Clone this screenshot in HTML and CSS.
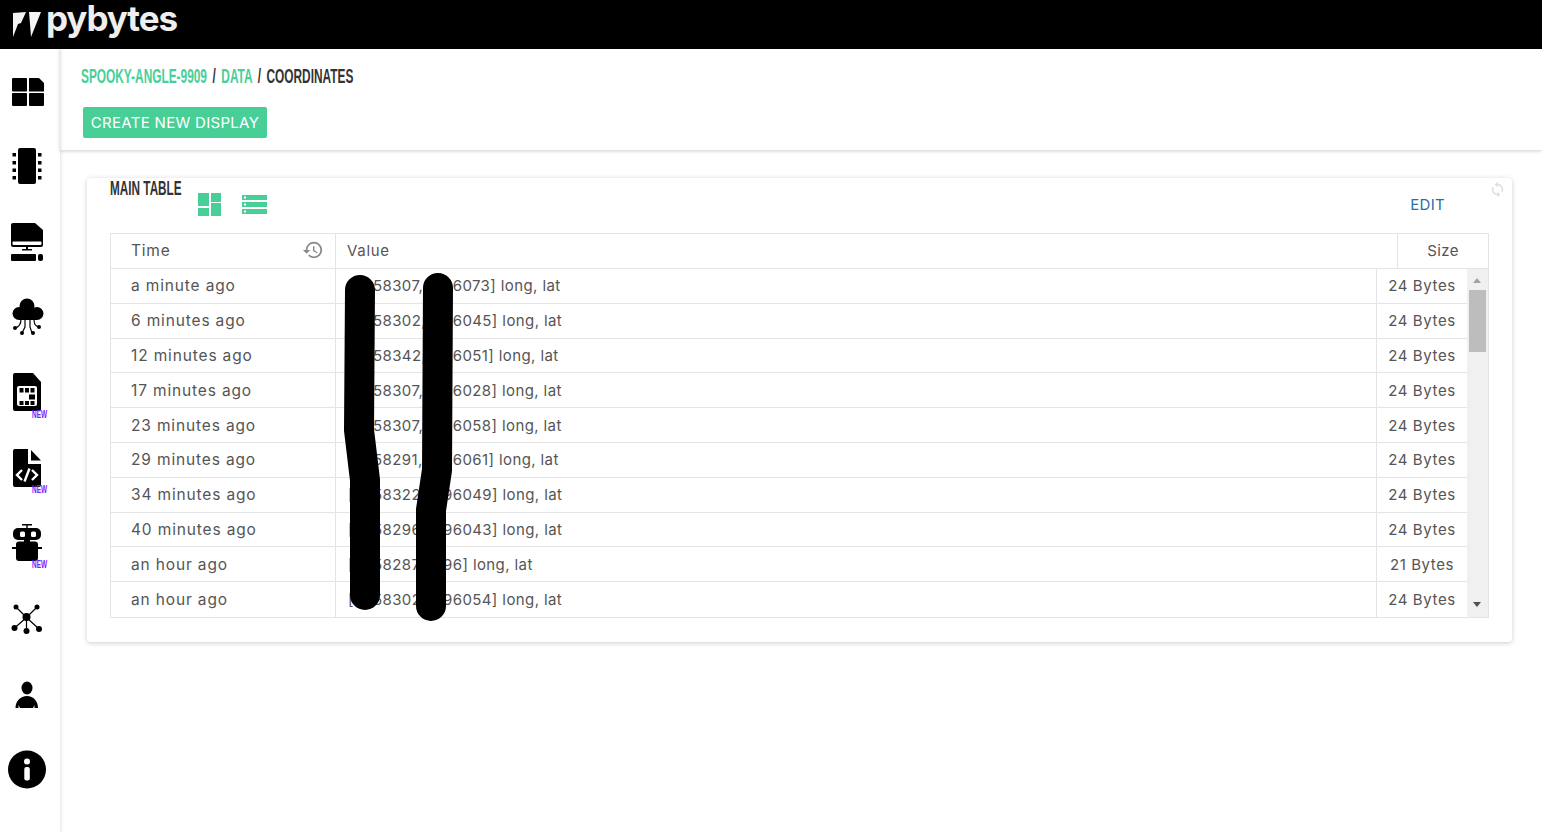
FILE: index.html
```html
<!DOCTYPE html>
<html>
  <head>
    <meta charset="utf-8">
    <title>Pybytes - Coordinates</title>
    <link rel="stylesheet" href="styles.css">
  </head>
  <body>
    <header class="topbar">
      <svg class="logo-mark" viewBox="0 0 28 26">
        <polygon points="0,1 13,0 8,11 5,12 0,25"/>
        <polygon points="16,0 28,0 18,25 17,12"/>
      </svg>
      <span class="logo-text">pybytes</span>
    </header>

    <div class="layout">
      <nav class="sidebar">
        <a class="nav-item">
          <svg viewBox="0 0 40 40"><rect x="5" y="7" width="15" height="13.500" rx="1"/><path d="M22 7h10l5 5v8.500H22z"/><rect x="5" y="22" width="15" height="13" rx="1"/><rect x="22" y="22" width="15" height="13" rx="1"/></svg>
        </a>
        <a class="nav-item">
          <svg viewBox="0 0 40 40"><rect x="11" y="2" width="18" height="36" rx="2"/><rect x="5.500" y="7" width="3.500" height="3.500"/><rect x="5.500" y="15" width="3.500" height="3.500"/><rect x="5.500" y="22.500" width="3.500" height="3.500"/><rect x="5.500" y="30" width="3.500" height="3.500"/><rect x="31" y="7" width="3.500" height="3.500"/><rect x="31" y="15" width="3.500" height="3.500"/><rect x="31" y="22.500" width="3.500" height="3.500"/><rect x="31" y="30" width="3.500" height="3.500"/></svg>
        </a>
        <a class="nav-item">
          <svg viewBox="0 0 40 40"><path d="M6 1h22l8 7v15a2 2 0 0 1-2 2H6a2 2 0 0 1-2-2V3a2 2 0 0 1 2-2z"/><rect class="cut" x="5.500" y="19.500" width="29" height="3.500" rx="1"/><rect x="19" y="25" width="2" height="3"/><rect x="15" y="27" width="10" height="1.500"/><rect x="4" y="32" width="25" height="7" rx="1"/><rect x="31" y="32" width="5" height="7" rx="2"/></svg>
        </a>
        <a class="nav-item">
          <svg viewBox="0 0 40 40"><circle cx="20" cy="9" r="7.500"/><circle cx="12" cy="16.500" r="6.500"/><circle cx="30" cy="16.500" r="6.500"/><rect x="12" y="14" width="18" height="9"/><path class="wire" d="M14 22c0 6-2 8-6 9M18 22v8l-3 6M23 22v8l2 6M27 22c0 5 1 7 5 8"/><circle cx="8" cy="31" r="2"/><circle cx="15" cy="36" r="2"/><circle cx="26" cy="36" r="2"/><circle cx="32" cy="30" r="2"/></svg>
        </a>
        <a class="nav-item">
          <svg viewBox="0 0 40 40"><path d="M8 0h18l8 9v27a2 2 0 0 1-2 2H8a2 2 0 0 1-2-2V2a2 2 0 0 1 2-2z"/><rect class="cut" x="10" y="13" width="20" height="20" rx="2"/><rect x="12.500" y="15" width="4" height="4.500"/><rect x="18" y="15" width="4" height="4.500"/><rect x="23.500" y="15" width="4" height="4.500"/><rect x="22" y="21.500" width="6" height="5"/><rect x="12.500" y="28" width="4" height="4"/><rect x="18" y="28" width="4" height="4"/><rect x="23.500" y="28" width="4" height="4"/></svg>
          <span class="badge">NEW</span>
        </a>
        <a class="nav-item">
          <svg viewBox="0 0 40 40"><path d="M8 1h13v15h13v21a2 2 0 0 1-2 2H8a2 2 0 0 1-2-2V3a2 2 0 0 1 2-2z"/><path d="M24 2l10 10.500H24z"/><path class="code" d="M15 22l-5 5 5 5M25 22l5 5-5 5M22.500 20.500l-5 13"/></svg>
          <span class="badge">NEW</span>
        </a>
        <a class="nav-item">
          <svg viewBox="0 0 40 40"><rect x="15" y="1" width="10" height="1.500"/><rect x="19.300" y="2" width="1.400" height="4"/><rect x="6" y="5" width="28" height="12" rx="5"/><rect class="cut" x="13" y="8.500" width="5" height="5.500" rx="1.500"/><rect class="cut" x="24" y="8.500" width="5" height="5.500" rx="1.500"/><rect x="17" y="16" width="6" height="3"/><rect x="9" y="18.500" width="22" height="19.500" rx="3"/><rect x="5" y="24" width="30" height="2"/></svg>
          <span class="badge">NEW</span>
        </a>
        <a class="nav-item">
          <svg viewBox="0 0 40 40"><path class="wire" d="M9 8l10.500 10.500M30 8L19.500 18.500M7.500 29l12-10.500M19.500 18.500V32M32 30L19.500 18.500"/><circle cx="19.500" cy="18" r="4"/><circle cx="9" cy="8" r="2.500"/><circle cx="30" cy="8" r="2.500"/><circle cx="7.500" cy="29" r="3"/><circle cx="19.500" cy="32" r="3"/><circle cx="32" cy="30" r="3"/></svg>
        </a>
        <a class="nav-item">
          <svg viewBox="0 0 40 40"><ellipse cx="20" cy="14" rx="5.500" ry="6.500"/><path d="M8.500 34c0-7 5-12 11.500-12s11 5 11 12h-3.500v-3l-1.500 3H13l-1.500-3v3z"/></svg>
        </a>
        <a class="nav-item">
          <svg viewBox="0 0 40 40"><circle cx="20" cy="19.500" r="19"/><circle class="cut" cx="20" cy="11.500" r="3"/><rect class="cut" x="17.300" y="17" width="5.500" height="13.500" rx="2"/></svg>
        </a>
      </nav>

      <main class="content">
        <section class="subheader">
          <h1 class="crumbs"><a>SPOOKY-ANGLE-9909</a> / <a>DATA</a> / COORDINATES</h1>
          <button class="btn-create">CREATE NEW DISPLAY</button>
        </section>

        <section class="card">
          <svg class="refresh" viewBox="0 0 24 24"><path d="M12 4V1L8 5l4 4V6c3.310 0 6 2.690 6 6 0 1.010-.25 1.970-.7 2.800l1.460 1.460A7.930 7.930 0 0 0 20 12c0-4.420-3.580-8-8-8zm0 14c-3.310 0-6-2.690-6-6 0-1.010.25-1.970.7-2.800L5.240 7.740A7.930 7.930 0 0 0 4 12c0 4.420 3.580 8 8 8v3l4-4-4-4v3z"/></svg>

          <div class="card-head">
            <h2 class="card-title">MAIN TABLE</h2>
            <svg class="view-icon quilt" viewBox="0 0 23 23"><rect x="0" y="0" width="11" height="13"/><rect x="0" y="15" width="11" height="8"/><rect x="13" y="0" width="10" height="9"/><rect x="13" y="10" width="10" height="13"/></svg>
            <svg class="view-icon list" viewBox="0 0 25 20"><path d="M0 0h25v5H0zM0 7h25v5H0zM0 14h25v5H0z"/><rect class="dot" x="2" y="1.500" width="2" height="2"/><rect class="dot" x="2" y="8.500" width="2" height="2"/><rect class="dot" x="2" y="15.500" width="2" height="2"/></svg>
            <a class="edit">EDIT</a>
          </div>

          <div class="table">
            <div class="thead">
              <div class="cell time-head"><span>Time</span><svg class="history" viewBox="0 0 24 24"><path d="M13 3a9 9 0 0 0-9 9H1l3.890 3.890.07.14L9 12H6c0-3.870 3.130-7 7-7s7 3.130 7 7-3.130 7-7 7c-1.930 0-3.680-.79-4.940-2.060l-1.420 1.420A8.954 8.954 0 0 0 13 21a9 9 0 0 0 0-18zm-1 5v5l4.280 2.540.72-1.210-3.500-2.080V8H12z"/></svg></div>
              <div class="cell value">Value</div>
              <div class="cell size">Size</div>
            </div>
            <div class="tbody">
              <div class="rows">
                <div class="row"><div class="cell time">a minute ago</div><div class="cell value"><span class="lead">[</span><span class="lon">58307,</span>96073] long, lat</div><div class="cell size">24 Bytes</div></div>
                <div class="row"><div class="cell time">6 minutes ago</div><div class="cell value"><span class="lead">[</span><span class="lon">58302,</span>96045] long, lat</div><div class="cell size">24 Bytes</div></div>
                <div class="row"><div class="cell time">12 minutes ago</div><div class="cell value"><span class="lead">[</span><span class="lon">58342,</span>96051] long, lat</div><div class="cell size">24 Bytes</div></div>
                <div class="row"><div class="cell time">17 minutes ago</div><div class="cell value"><span class="lead">[</span><span class="lon">58307,</span>96028] long, lat</div><div class="cell size">24 Bytes</div></div>
                <div class="row"><div class="cell time">23 minutes ago</div><div class="cell value"><span class="lead">[</span><span class="lon">58307,</span>96058] long, lat</div><div class="cell size">24 Bytes</div></div>
                <div class="row"><div class="cell time">29 minutes ago</div><div class="cell value"><span class="lead">[</span><span class="lon">58291,</span>96061] long, lat</div><div class="cell size">24 Bytes</div></div>
                <div class="row"><div class="cell time">34 minutes ago</div><div class="cell value"><span class="lead">[</span><span class="lon">58322,</span>96049] long, lat</div><div class="cell size">24 Bytes</div></div>
                <div class="row"><div class="cell time">40 minutes ago</div><div class="cell value"><span class="lead">[</span><span class="lon">58296,</span>96043] long, lat</div><div class="cell size">24 Bytes</div></div>
                <div class="row"><div class="cell time">an hour ago</div><div class="cell value"><span class="lead">[</span><span class="lon">58287,</span>96] long, lat</div><div class="cell size">21 Bytes</div></div>
                <div class="row"><div class="cell time">an hour ago</div><div class="cell value"><span class="lead">[</span><span class="lon">58302,</span>96054] long, lat</div><div class="cell size">24 Bytes</div></div>
              </div>
              <div class="scrollbar">
                <span class="arrow up"></span>
                <span class="thumb"></span>
                <span class="arrow down"></span>
              </div>
            </div>
          </div>
        </section>
      </main>
    </div>

    <!-- marker strokes drawn over the table -->
    <svg class="scribble" viewBox="0 0 1542 832">
      <path d="M360 290L359 430L365 480L365 595"/>
      <path d="M438 288L437 470L431 510L431 606"/>
    </svg>
  </body>
</html>
```

FILE: styles.css
```css
* {
  box-sizing: border-box;
}

html, body {
  height: 100%;
}

body {
  margin: 0;
  overflow: hidden;
  background: #fff;
  color: #555;
  font-family: Inter, "Liberation Sans", sans-serif;
  font-size: 15px;
  letter-spacing: 0.4px;
}

.topbar {
  display: flex;
  align-items: flex-start;
  height: 49px;
  padding: 0 0 0 13px;
  background: #000;
}

.logo-mark {
  width: 28px;
  height: 26px;
  margin-top: 12px;
  fill: #f4f4f4;
}

.logo-text {
  margin: -4px 0 0 5px;
  color: #eee;
  font-size: 35px;
  font-weight: 700;
  letter-spacing: -1.1px;
  line-height: 44px;
}

.layout {
  display: flex;
  height: calc(100vh - 49px);
}

.sidebar {
  display: flex;
  flex: 0 0 60px;
  flex-direction: column;
  align-items: center;
  gap: 35.400px;
  padding: 22px 6px 0 0;
  background: #fff;
  box-shadow: 1px 0 3px rgba(0, 0, 0, 0.12);
}

.nav-item {
  position: relative;
  display: block;
  width: 40px;
  height: 40px;
}

.nav-item svg {
  display: block;
  width: 40px;
  height: 40px;
  fill: #000;
}

.nav-item .cut {
  fill: #fff;
}

.nav-item .wire {
  fill: none;
  stroke: #000;
  stroke-width: 1.200;
}

.nav-item .code {
  fill: none;
  stroke: #fff;
  stroke-width: 2.400;
}

.badge {
  position: absolute;
  top: 37px;
  left: 25px;
  color: #7a1cff;
  font-family: "Liberation Sans", sans-serif;
  font-size: 10.500px;
  font-weight: 700;
  letter-spacing: 0;
  line-height: 9px;
  transform: scaleX(0.62);
  transform-origin: left;
}

.content {
  flex: 1;
  min-width: 0;
}

.subheader {
  height: 101px;
  padding: 15px 0 0 21px;
  box-shadow: 0 1px 4px rgba(0, 0, 0, 0.2);
}

.crumbs {
  margin: 0;
  color: #333;
  font-family: "Liberation Sans", sans-serif;
  font-size: 21px;
  font-weight: 700;
  letter-spacing: 0;
  line-height: 24px;
  transform: scaleX(0.565);
  transform-origin: left;
  white-space: nowrap;
  word-spacing: 4px;
}

.crumbs a {
  color: #48cf98;
}

.btn-create {
  display: block;
  width: 184px;
  height: 31px;
  margin: 19px 0 0 2px;
  padding: 0;
  border: 0;
  border-radius: 2px;
  background: #47cf97;
  color: #fff;
  font-family: inherit;
  font-size: 15px;
  letter-spacing: 0.3px;
}

.card {
  position: relative;
  margin: 28px 30px 0 27px;
  padding: 0 23px 24px;
  border-radius: 4px;
  box-shadow: 0 1px 5px rgba(0, 0, 0, 0.2);
}

.refresh {
  position: absolute;
  top: 3px;
  right: 6px;
  width: 17px;
  height: 17px;
  fill: #ddd;
}

.card-head {
  display: flex;
  align-items: flex-start;
  height: 55px;
}

.card-title {
  flex: 0 0 72px;
  min-width: 0;
  margin: 0;
  color: #333;
  font-family: "Liberation Sans", sans-serif;
  font-size: 21px;
  font-weight: 700;
  letter-spacing: 0;
  line-height: 20px;
  transform: scaleX(0.56);
  transform-origin: left;
  white-space: nowrap;
}

.view-icon {
  fill: #47cf97;
}

.view-icon.quilt {
  width: 23px;
  height: 23px;
  margin: 15px 0 0 16px;
}

.view-icon.list {
  width: 25px;
  height: 20px;
  margin: 17px 0 0 21px;
}

.view-icon .dot {
  fill: #fff;
}

.edit {
  margin: 17px 44px 0 auto;
  color: #2a6da8;
  font-size: 15px;
  letter-spacing: 0.3px;
  line-height: 20px;
}

.table {
  border: 1px solid #e4e4e4;
}

.thead {
  display: grid;
  grid-template-columns: 224px 1fr 91px;
  height: 35px;
  border-bottom: 1px solid #e4e4e4;
}

.cell {
  display: flex;
  align-items: center;
  white-space: pre;
}

.thead .cell {
  padding-bottom: 2px;
}

.thead .cell + .cell,
.row .cell + .cell {
  border-left: 1px solid #e4e4e4;
}

.thead .time-head {
  justify-content: space-between;
  padding: 0 11px 2px 20px;
  font-size: 15.500px;
  letter-spacing: 0.8px;
}

.time {
  padding-left: 20px;
  font-size: 15.500px;
  letter-spacing: 0.85px;
}

.history {
  width: 22px;
  height: 22px;
  fill: #888;
}

.value {
  padding-left: 12px;
}

.thead .value {
  padding-left: 11px;
  letter-spacing: 0.7px;
}

.size {
  justify-content: center;
}

.row .size {
  letter-spacing: 0.6px;
}

.tbody {
  display: flex;
  height: 348px;
}

.rows {
  display: grid;
  flex: 1;
  grid-template-rows: repeat(10, 1fr);
}

.row {
  display: grid;
  grid-template-columns: 224px 1fr 91px;
  border-bottom: 1px solid #e4e4e4;
}

.row:last-child {
  border-bottom: 0;
}

.lead {
  width: 25px;
}

.lon {
  width: 70px;
}

.scrollbar {
  position: relative;
  flex: 0 0 21px;
  background: #f0f0f0;
}

.thumb {
  position: absolute;
  top: 21px;
  left: 2px;
  width: 17px;
  height: 62px;
  background: #bdbdbd;
}

.arrow {
  position: absolute;
  left: 6px;
  border-right: 4px solid transparent;
  border-left: 4px solid transparent;
}

.arrow.up {
  top: 9px;
  border-bottom: 5px solid #a3a3a3;
}

.arrow.down {
  bottom: 10px;
  border-top: 5px solid #505050;
}

.scribble {
  position: absolute;
  top: 0;
  left: 0;
  width: 1542px;
  height: 832px;
  fill: none;
  pointer-events: none;
  stroke: #000;
  stroke-linecap: round;
  stroke-linejoin: round;
  stroke-width: 30;
}
```
